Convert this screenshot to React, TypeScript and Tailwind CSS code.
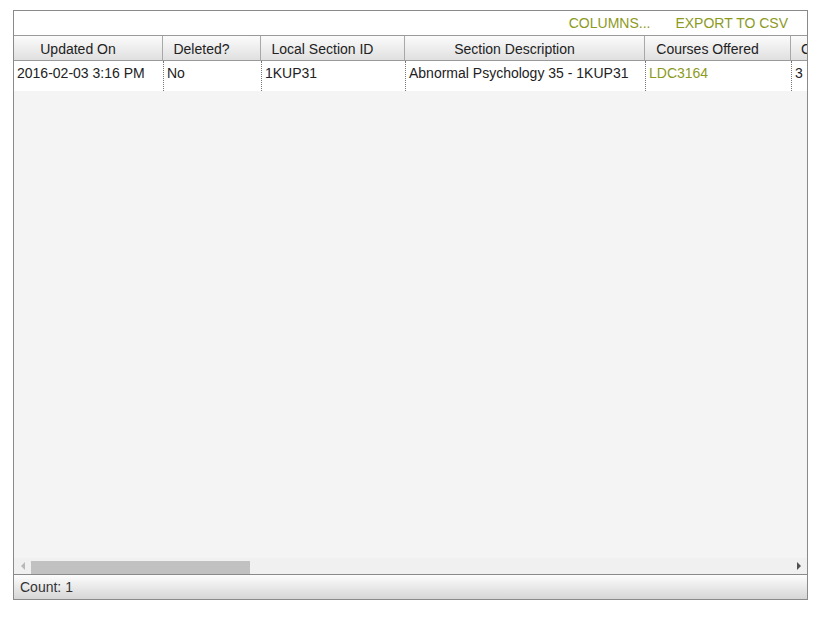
const columns = [
  { label: "Updated On", width: 149 },
  { label: "Deleted?", width: 98 },
  { label: "Local Section ID", width: 144 },
  { label: "Section Description", width: 240 },
  { label: "Courses Offered", width: 146 },
  { label: "Credits", width: 60 },
];

const row = ["2016-02-03 3:16 PM", "No", "1KUP31", "Abnormal Psychology 35 - 1KUP31", "LDC3164", "3"];

export default function App() {
  return (
    <div className="h-[620px] w-[826px] bg-white pt-[10px] pl-[13px] font-['Liberation_Sans',Arial,sans-serif] text-[14px] text-[#222]">
      <div className="flex h-[590px] w-[795px] flex-col overflow-hidden border border-[#8a8a8a] bg-[#f4f4f4]">
        {/* toolbar */}
        <div className="flex h-[24px] shrink-0 items-center justify-end gap-[25px] bg-white pr-[19px] text-[14px] text-[#8c9a1e]">
          <span>COLUMNS...</span>
          <span>EXPORT TO CSV</span>
        </div>

        {/* grid */}
        <div className="flex min-h-0 flex-1 flex-col overflow-hidden">
          <div className="flex h-[26px] shrink-0 overflow-hidden border-y border-[#9a9a9a] bg-gradient-to-b from-[#fbfbfb] to-[#e0e0e0]">
            {columns.map((c, i) =>
              i < columns.length - 1 ? (
                <div
                  key={c.label}
                  className="flex shrink-0 items-center justify-center overflow-hidden whitespace-nowrap border-r border-[#a8a8a8] pt-[2px] pr-[20px]"
                  style={{ width: c.width }}
                >
                  {c.label}
                </div>
              ) : (
                <div
                  key={c.label}
                  className="flex min-w-0 flex-1 items-center overflow-hidden whitespace-nowrap pt-[2px] pl-[10px]"
                >
                  {c.label}
                </div>
              )
            )}
          </div>
          <div className="flex h-[30px] shrink-0 overflow-hidden bg-white">
            {row.map((v, i) => (
              <div
                key={i}
                className={
                  "flex shrink-0 items-start overflow-hidden whitespace-nowrap pt-[2px] pl-[3px] " +
                  (i === 0 ? "" : "border-l border-dotted border-[#777] ") +
                  (i === 4 ? "text-[#8c9a1e]" : "")
                }
                style={{ width: columns[i].width }}
              >
                {v}
              </div>
            ))}
          </div>
          <div className="flex-1" />
          {/* horizontal scrollbar */}
          <div className="flex h-[16px] shrink-0 items-center bg-[#f0f0f0]">
            <div className="flex w-[17px] shrink-0 justify-center">
              <span className="h-0 w-0 border-y-[4px] border-r-[4px] border-y-transparent border-r-[#b8b8b8]" />
            </div>
            <div className="flex h-full flex-1 items-end">
              <div className="h-[13px] w-[219px] bg-[#c1c1c1]" />
            </div>
            <div className="flex w-[17px] shrink-0 justify-center">
              <span className="h-0 w-0 border-y-[4px] border-l-[4px] border-y-transparent border-l-[#505050]" />
            </div>
          </div>
        </div>

        {/* footer */}
        <div className="flex h-[25px] shrink-0 items-center border-t border-[#8a8a8a] bg-gradient-to-b from-[#fdfdfd] to-[#d6d6d6] pl-[6px] text-[#333]">
          Count: 1
        </div>
      </div>
    </div>
  );
}
